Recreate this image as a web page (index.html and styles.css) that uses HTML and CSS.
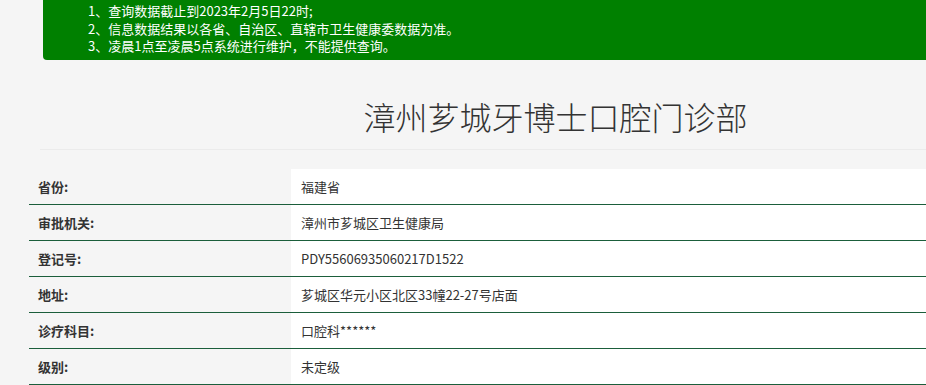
FILE: index.html
```html
<!DOCTYPE html>
<html lang="zh-CN">
<head>
<meta charset="utf-8">
<title>漳州芗城牙博士口腔门诊部</title>
<link rel="stylesheet" href="styles.css">
</head>
<body>
<div class="notice">
  <p>1、查询数据截止到2023年2月5日22时;</p>
  <p>2、信息数据结果以各省、自治区、直辖市卫生健康委数据为准。</p>
  <p>3、凌晨1点至凌晨5点系统进行维护，不能提供查询。</p>
</div>
<h1 class="title">漳州芗城牙博士口腔门诊部</h1>
<table class="info">
  <tbody>
    <tr><th>省份:</th><td>福建省</td></tr>
    <tr><th>审批机关:</th><td>漳州市芗城区卫生健康局</td></tr>
    <tr><th>登记号:</th><td>PDY55606935060217D1522</td></tr>
    <tr><th>地址:</th><td>芗城区华元小区北区33幢22-27号店面</td></tr>
    <tr><th>诊疗科目:</th><td>口腔科******</td></tr>
    <tr><th>级别:</th><td>未定级</td></tr>
  </tbody>
</table>
</body>
</html>
```
FILE: styles.css
```css
html, body {
  margin: 0;
  padding: 0;
}
body {
  background: #f5f5f5;
  width: 926px;
  height: 385px;
  overflow: hidden;
  font-family: "Noto Sans CJK SC", "Noto Sans", sans-serif;
  color: #333;
}
.notice {
  margin-left: 43px;
  width: 1100px;
  height: 60px;
  box-sizing: border-box;
  background: #008000;
  border-radius: 0 0 4px 4px;
  padding: 2px 0 0 45px;
  color: #fff;
  font-size: 13px;
  line-height: 17.5px;
}
.notice p {
  margin: 0;
}
.title {
  margin: 34px 0 0 40px;
  width: 1031px;
  text-align: center;
  font-size: 32px;
  font-weight: 300;
  line-height: 44px;
  padding-bottom: 11px;
  border-bottom: 1px solid #ebebeb;
  color: #333;
}
.info {
  margin: 19px 0 0 29px;
  width: 1100px;
  border-collapse: collapse;
  font-size: 13px;
}
.info th, .info td {
  height: 35px;
  padding: 0;
  border-bottom: 1px solid #1b5e3b;
  vertical-align: middle;
  text-align: left;
}
.info th {
  width: 253px;
  padding-left: 9px;
  font-weight: bold;
  color: #333;
  background: #f5f5f5;
}
.info td {
  padding-left: 10px;
  background: #fff;
  color: #333;
}
```
